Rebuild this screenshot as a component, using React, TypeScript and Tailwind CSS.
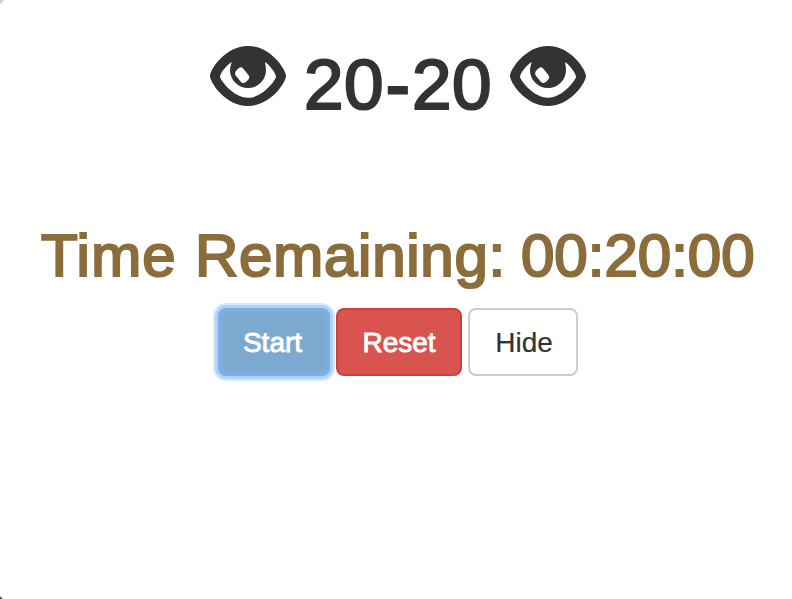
function Eye() {
  return (
    <svg width="76" height="60" viewBox="0 0 76 60" className="mt-4 block shrink-0">
      <path
        fill="#333333"
        fillRule="evenodd"
        d="M38 0C61 0 76 24 76 30C76 36 61 60 38 60C15 60 0 36 0 30C0 24 15 0 38 0Z M21.7 16C15 20.500 10 28 10 30.800C10 33.500 23 51.800 38 51.800C53 51.800 66 33.500 66 30.800C66 28 61 20.500 55.300 16C55 18 56 21 56 24A18 18 0 0 1 20 24C20 21 21 19 21.700 16Z M28.700 22.200Q31 20.200 32.700 22L38.600 29.300Q40 31.300 38.600 33.300Q36.500 36 33.800 36.900Q32.200 37.300 31 35.900L25.700 29.600Q24.600 27.700 25.500 25.800Q26.800 23.600 28.700 22.200Z"
      />
    </svg>
  );
}

export default function App() {
  return (
    <main className="flex h-[599px] w-[792px] flex-col overflow-hidden bg-[radial-gradient(circle_at_bottom_left,#222_0,#222_1px,transparent_3px),linear-gradient(135deg,#ccc_0,#ccc_2px,transparent_4px)] font-['Liberation_Sans',Arial,sans-serif]">
      <h1 className="mt-[30px] flex h-[104px] pl-[210px] text-[71px] leading-[110px] text-[#333333]">
        <Eye />
        <span className="ml-[18px] w-[206px] whitespace-nowrap tracking-[0.5px] [-webkit-text-stroke:2.2px_#333333]">
          20<span className="inline-block w-[28px] text-center [-webkit-text-stroke:2.8px_#333333]">-</span>20
        </span>
        <Eye />
      </h1>
      <h2 className="mt-[86px] flex h-[72px] whitespace-nowrap pl-[41px] text-[60px] leading-[72px] text-[#8a6d3b] [-webkit-text-stroke:2.2px_#8a6d3b]">
        <span className="w-[154px] tracking-[1.2px]">Time</span>
        <span className="w-[326px] tracking-[0.75px]">Remaining:</span>
        <span>00:20:00</span>
      </h2>
      <div className="mt-4 flex gap-1.5 pl-[218px] text-[28px] leading-[66px]">
        <button className="flex h-[68px] w-[112px] items-start justify-center rounded-lg border-2 border-[#7cafe4] bg-[#7ca9d0] pr-[3px] text-white shadow-[inset_0_0_6px_#7bb4f5,0_0_0_3px_#acd4ff,0_0_0_5px_#d9eaff] [-webkit-text-stroke:0.9px_white]">Start</button>
        <button className="flex h-[68px] w-[126px] items-start justify-center rounded-lg border-2 border-[#d43f3a] bg-[#d9534f] text-white [-webkit-text-stroke:0.9px_white]">Reset</button>
        <button className="flex h-[68px] w-[110px] items-start justify-center rounded-lg border-2 border-[#cccccc] bg-white pl-[2px] text-[#333333] [-webkit-text-stroke:0.2px_#333333]">Hide</button>
      </div>
    </main>
  );
}
